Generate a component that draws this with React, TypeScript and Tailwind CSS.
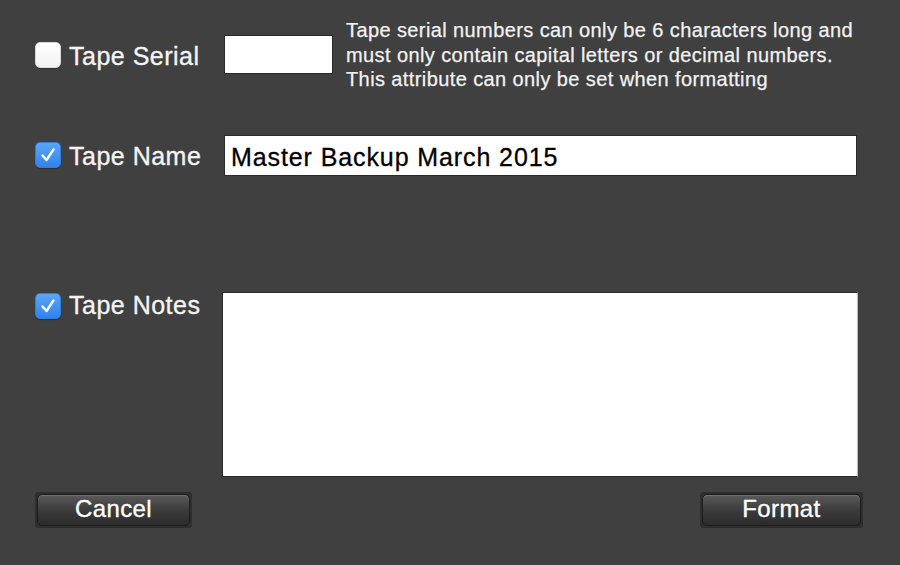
import React from 'react';

function CheckBox({ checked }: { checked: boolean }) {
  if (!checked) {
    return (
      <div className="h-[26px] w-[26px] shrink-0 rounded-[5px] border border-[#d8d8d8] bg-gradient-to-b from-white to-[#f2f2f2] shadow-[0_1px_1px_rgba(0,0,0,0.3)]" />
    );
  }
  return (
    <div className="flex h-[26px] w-[26px] shrink-0 items-center justify-center rounded-[5px] border border-[#2f7fe0] bg-gradient-to-b from-[#5aa7f7] to-[#2f83ec] shadow-[0_1px_1px_rgba(0,0,0,0.3)]">
      <svg width="20" height="20" viewBox="0 0 20 20" fill="none">
        <path d="M4.5 10.5 L8.5 15 L15.5 4.5" stroke="white" strokeWidth="2.4" strokeLinecap="round" strokeLinejoin="round" />
      </svg>
    </div>
  );
}

function Label({ text, pad }: { text: string; pad: string }) {
  return (
    <span className={`${pad} text-[25px] leading-none tracking-[0.5px] text-[#f4f4f4] [-webkit-text-stroke:0.35px_#f4f4f4]`}>
      {text}
    </span>
  );
}

function Field({ checked, label }: { checked: boolean; label: string }) {
  return (
    <div className="flex w-[189px] shrink-0 items-center gap-[8px]">
      <CheckBox checked={checked} />
      <Label text={label} pad="pt-[3px]" />
    </div>
  );
}

function MacButton({ label, width }: { label: string; width: string }) {
  return (
    <div className={`${width} rounded-[3px] bg-[#2e2e2e] p-[2px]`}>
      <button className="flex h-[32px] w-full items-center justify-center rounded-[5px] border border-[#1c1c1c] bg-gradient-to-b from-[#5a5a5a] via-[#3c3c3c] to-[#2b2b2b] pb-[2px] text-[24px] leading-none tracking-[0.4px] text-white shadow-[inset_0_1px_0_rgba(255,255,255,0.15)] [-webkit-text-stroke:0.35px_white]">
        {label}
      </button>
    </div>
  );
}

export default function App() {
  return (
    <div className="flex h-[565px] w-[900px] flex-col bg-[#404040] pl-[35px] font-['Liberation_Sans',Arial,sans-serif]">
      <div className="flex items-center pt-[18px]">
        <Field checked={false} label="Tape Serial" />
        <div className="h-[39px] w-[109px] shrink-0 border border-[#2a2a2a] bg-white" />
        <p className="ml-[13px] text-[20px] leading-[24.5px] tracking-[0.4px] text-[#f2f2f2] [-webkit-text-stroke:0.25px_#f2f2f2]">
          Tape serial numbers can only be 6 characters long and
          <br />
          must only contain capital letters or decimal numbers.
          <br />
          This attribute can only be set when formatting
        </p>
      </div>

      <div className="mt-[43px] flex items-center">
        <Field checked={true} label="Tape Name" />
        <div className="flex h-[41px] w-[633px] items-center border border-[#2a2a2a] bg-white px-[6px] pt-[4px]">
          <span className="text-[25px] leading-none tracking-[0.9px] text-black [-webkit-text-stroke:0.3px_black]">Master Backup March 2015</span>
        </div>
      </div>

      <div className="mt-[116px] flex items-start">
        <div className="mt-[1px] w-[187px] shrink-0">
          <div className="flex items-center gap-[8px]">
            <CheckBox checked={true} />
            <Label text="Tape Notes" pad="pt-0" />
          </div>
        </div>
        <div className="h-[185px] w-[636px] border border-[#2a2a2a] border-r-[#bdbdbd] bg-white" />
      </div>

      <div className="mt-[15px] flex w-[828px] justify-between">
        <MacButton label="Cancel" width="w-[157px]" />
        <MacButton label="Format" width="w-[163px]" />
      </div>
    </div>
  );
}
